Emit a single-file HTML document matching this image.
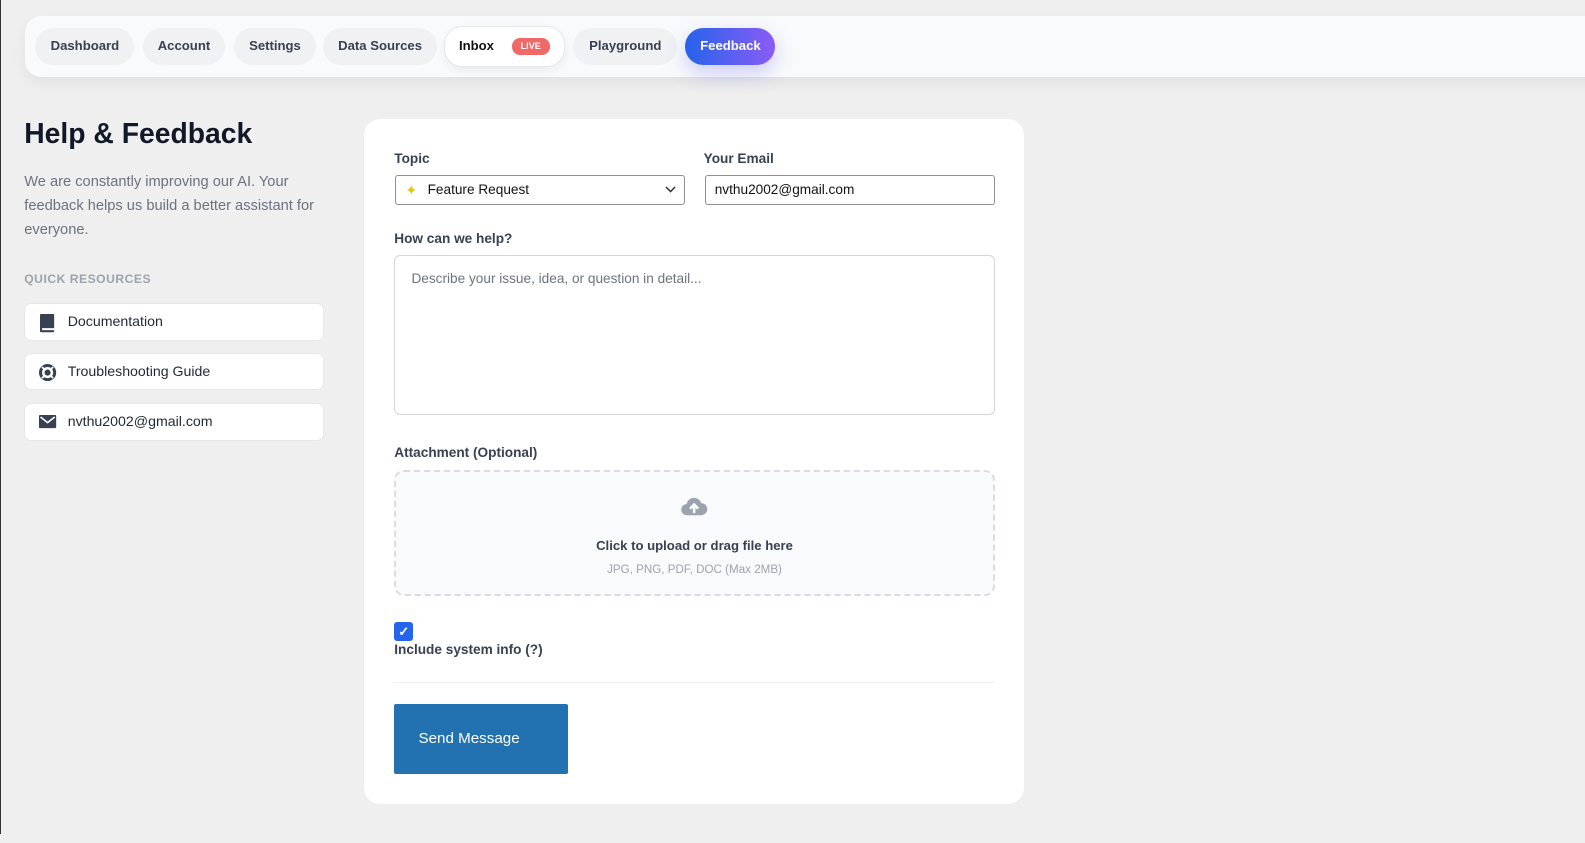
<!DOCTYPE html>
<html><head><meta charset="utf-8"><style>
*{box-sizing:border-box;margin:0;padding:0}
body{width:1585px;height:834px;background:#efefef;font-family:"Liberation Sans",sans-serif;position:relative;overflow:hidden;border-left:1px solid #333;color:#1f2937}
#w{position:absolute;left:0;top:0;width:1570px;height:834px;zoom:1.011}
.nav{position:absolute;left:24px;top:16px;width:1560px;height:60px;background:#f9fafb;border-radius:16px 0 0 16px;box-shadow:0 6px 14px rgba(0,0,0,.06)}
.pill{position:absolute;top:12px;height:36px;border-radius:18px;background:#f0f1f3;font-weight:bold;font-size:13px;color:#374151;line-height:36px;text-align:center}
.abs{position:absolute}
.res{position:absolute;left:23px;width:296px;height:37px;background:#fff;border:1px solid #e5e7eb;border-radius:7px;font-size:14px;color:#1f2937;line-height:35px;padding-left:42px}
.res svg{position:absolute;left:14px;top:10px}
.card{position:absolute;left:359px;top:118px;width:653px;height:677px;background:#fff;border-radius:16px}
.lbl{position:absolute;font-size:13.5px;font-weight:bold;color:#374151}
.inp{position:absolute;border:1px solid #8f8f8f;border-radius:3px;font-size:13.5px;color:#111;padding-left:9px;line-height:28px}
</style></head><body><div id="w">
<div class="nav">
<div class="pill" style="left:10px;width:98px">Dashboard</div>
<div class="pill" style="left:116px;width:82px">Account</div>
<div class="pill" style="left:206px;width:82px">Settings</div>
<div class="pill" style="left:295px;width:112px">Data Sources</div>
<div class="pill" style="left:414px;top:10px;height:40px;width:120px;background:#fff;border:1px solid #e5e7eb;color:#111;text-align:left;padding-left:14px;line-height:38px;box-shadow:0 4px 10px rgba(0,0,0,.06)">Inbox<span style="position:absolute;left:66px;top:11px;height:16px;width:38px;background:#f06868;border-radius:8px;color:#fff;font-size:9px;line-height:16px;text-align:center">LIVE</span></div>
<div class="pill" style="left:542px;width:103px">Playground</div>
<div class="pill" style="left:653px;width:89px;background:linear-gradient(90deg,#2563eb,#8b5cf6);color:#fff;box-shadow:0 8px 20px rgba(99,102,241,.3)">Feedback</div>
</div>

<div class="abs" style="left:23px;top:116px;font-size:28px;font-weight:bold;color:#111827">Help &amp; Feedback</div>
<div class="abs" style="left:23px;top:168px;width:300px;font-size:14.5px;line-height:24px;color:#6b7280">We are constantly improving our AI. Your feedback helps us build a better assistant for everyone.</div>
<div class="abs" style="left:23px;top:269px;font-size:12px;font-weight:bold;color:#9ca3af;letter-spacing:.5px">QUICK RESOURCES</div>
<div class="res" style="top:300px"><svg width="16" height="18" viewBox="0 0 16 18"><rect x="1" y="0" width="14" height="18" rx="1" fill="#374151"/><rect x="3" y="14" width="12" height="2" fill="#fff"/></svg>Documentation</div>
<div class="res" style="top:349px"><svg width="17" height="17" viewBox="0 0 17 17"><circle cx="8.5" cy="8.5" r="7" fill="none" stroke="#374151" stroke-width="3"/><circle cx="8.5" cy="8.5" r="3" fill="#374151"/><path d="M3 3L6 6M14 3L11 6M3 14L6 11M14 14L11 11" stroke="#fff" stroke-width="1.8"/></svg>Troubleshooting Guide</div>
<div class="res" style="top:399px"><svg width="17" height="14" viewBox="0 0 17 14" style="top:11px"><rect width="17" height="13" rx="1" fill="#374151"/><path d="M1.5 2L8.5 7.5L15.5 2" stroke="#fff" stroke-width="1.6" fill="none"/></svg>nvthu2002@gmail.com</div>

<div class="card">
<div class="lbl" style="left:30px;top:31px">Topic</div>
<div class="inp" style="left:31px;top:55px;width:287px;height:30px;padding-left:31px">Feature Request<span style="position:absolute;left:9px;top:0;color:#e7c500;font-size:14px">✦</span><svg style="position:absolute;right:8px;top:10px" width="11" height="7" viewBox="0 0 11 7"><path d="M1 1L5.5 5.5L10 1" stroke="#333" stroke-width="1.5" fill="none"/></svg></div>
<div class="lbl" style="left:336px;top:31px">Your Email</div>
<div class="inp" style="left:337px;top:55px;width:287px;height:30px">nvthu2002@gmail.com</div>
<div class="lbl" style="left:30px;top:110px">How can we help?</div>
<div class="abs" style="left:30px;top:134px;width:594px;height:158px;border:1px solid #d1d5db;border-radius:6px;font-size:13.5px;color:#6b7280;padding:15px 16px">Describe your issue, idea, or question in detail...</div>
<div class="lbl" style="left:30px;top:322px">Attachment (Optional)</div>
<div class="abs" style="left:30px;top:347px;width:594px;height:125px;border:2px dashed #d9dce1;border-radius:10px;background:#f9fafb;text-align:center">
<svg style="margin-top:24px" width="26" height="20" viewBox="0 0 26 20"><path d="M6 19A5.5 5.5 0 0 1 5.5 8A7.5 7.5 0 0 1 20 7A6 6 0 0 1 20 19Z" fill="#9ca3af"/><path d="M13 17V9M9 12.5L13 8.5L17 12.5" stroke="#fff" stroke-width="2.5" fill="none"/></svg>
<div style="font-size:13px;font-weight:bold;color:#374151;margin-top:16px">Click to upload or drag file here</div>
<div style="font-size:11.5px;color:#9ca3af;margin-top:10px">JPG, PNG, PDF, DOC (Max 2MB)</div></div>
<div class="abs" style="left:30px;top:497px;width:19px;height:19px;background:#2563eb;border-radius:3px;color:#fff;font-size:13px;text-align:center;line-height:19px;font-weight:bold">✓</div>
<div class="lbl" style="left:30px;top:517px">Include system info (?)</div>
<div class="abs" style="left:30px;top:557px;width:594px;height:1px;background:#eef0f2"></div>
<div class="abs" style="left:30px;top:578px;width:172px;height:70px;background:#2271b1;border-radius:2px;color:#fff;font-size:15px;line-height:70px;padding-left:24px">Send Message</div>
</div>
</div></body></html>
